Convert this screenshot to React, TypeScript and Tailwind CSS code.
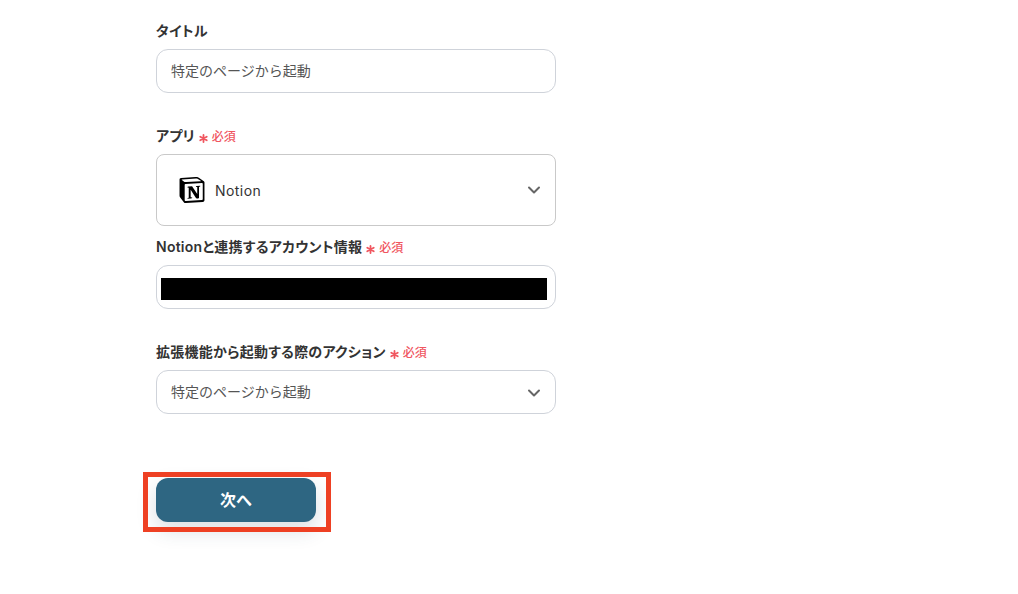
import { ChevronDown } from "lucide-react";
import { SiNotion } from "react-icons/si";

const font = "font-['Inter','Noto_Sans_CJK_JP',sans-serif]";

function Required() {
  return (
    <span className="ml-[4px] mt-[2px] flex items-center text-[12px] font-medium tracking-normal text-[#f0565f] [font-feature-settings:'normal']">
      <svg viewBox="0 0 10 10" className="mr-[4px] mt-[3px] h-[9px] w-[9px]" stroke="#f0565f" strokeWidth="2" strokeLinecap="round">
        <path d="M5 1v8M1.4 3 8.6 7M8.6 3 1.4 7" />
      </svg>
      必須
    </span>
  );
}

function Label({ text, required }: { text: string; required?: boolean }) {
  return (
    <div className="flex h-[18px] items-center text-[14px] font-semibold leading-[18px] tracking-[0.25px] text-[#333333] [font-feature-settings:'palt']">
      {text}
      {required && <Required />}
    </div>
  );
}

export default function App() {
  return (
    <div className={`relative h-[594px] w-[1018px] overflow-hidden bg-white pl-[156px] pt-[22px] ${font}`}>
      <Label text="タイトル" />
      <div className="mt-[9px] flex h-[44px] w-[400px] items-center rounded-[12px] border border-[#cfd3da] px-[14px] pb-[2px] text-[14px] text-[#555555]">
        特定のページから起動
      </div>

      <div className="mt-[34px]">
        <Label text="アプリ" required />
      </div>
      <div className="mt-[9px] flex h-[72px] w-[400px] items-center rounded-[8px] border border-[#c9c9c9] pl-[22px] pr-[11px]">
        <SiNotion className="h-[26px] w-[26px] text-black" />
        <span className="ml-[10px] text-[14px] tracking-[0.45px] text-[#333333]">Notion</span>
        <ChevronDown className="ml-auto h-[20px] w-[20px] text-[#666666]" strokeWidth={2.4} />
      </div>

      <div className="mt-[12px]">
        <Label text="Notionと連携するアカウント情報" required />
      </div>
      <div className="mt-[9px] flex h-[44px] w-[400px] items-center rounded-[12px] border border-[#cfd3da] pl-[4px] pr-[8px] pt-[4px]">
        <div className="h-[22px] w-full bg-black" />
      </div>

      <div className="mt-[34px]">
        <Label text="拡張機能から起動する際のアクション" required />
      </div>
      <div className="mt-[9px] flex h-[44px] w-[400px] items-center justify-between rounded-[12px] border border-[#cfd3da] pl-[14px] pr-[11px] text-[14px] text-[#555555]">
        <span className="pb-[2px]">特定のページから起動</span>
        <ChevronDown className="mt-[2px] h-[20px] w-[20px] text-[#666666]" strokeWidth={2.4} />
      </div>

      <button className="mt-[64px] flex h-[44px] w-[160px] items-center justify-center rounded-[12px] bg-[#2e6682] pb-[1px] text-[16px] font-bold text-white shadow-[0_8px_20px_rgba(46,72,92,0.18)]">
        次へ
      </button>

      {/* annotation frame drawn over the button */}
      <div className="absolute left-[143px] top-[472px] h-[60px] w-[188px] border-[5px] border-[#ee4023]" />
    </div>
  );
}
